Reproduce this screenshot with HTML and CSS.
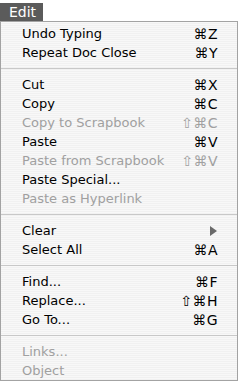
FILE: index.html
```html
<!DOCTYPE html>
<html lang="en">
<head>
  <meta charset="UTF-8">
  <meta name="viewport" content="width=device-width, initial-scale=1.0">
  <title>Edit Menu</title>
  <link rel="stylesheet" href="styles.css">
</head>
<body>
<div class="menu-title">Edit</div>
<div class="menu">
  <div class="item"><span>Undo Typing</span><span class="key">⌘Z</span></div>
  <div class="item"><span>Repeat Doc Close</span><span class="key">⌘Y</span></div>
  <div class="sep"></div>
  <div class="item"><span>Cut</span><span class="key">⌘X</span></div>
  <div class="item"><span>Copy</span><span class="key">⌘C</span></div>
  <div class="item disabled"><span>Copy to Scrapbook</span><span class="key">⇧⌘C</span></div>
  <div class="item"><span>Paste</span><span class="key">⌘V</span></div>
  <div class="item disabled"><span>Paste from Scrapbook</span><span class="key">⇧⌘V</span></div>
  <div class="item"><span>Paste Special...</span></div>
  <div class="item disabled"><span>Paste as Hyperlink</span></div>
  <div class="sep"></div>
  <div class="item"><span>Clear</span><span class="arrow"></span></div>
  <div class="item"><span>Select All</span><span class="key">⌘A</span></div>
  <div class="sep"></div>
  <div class="item"><span>Find...</span><span class="key">⌘F</span></div>
  <div class="item"><span>Replace...</span><span class="key">⇧⌘H</span></div>
  <div class="item"><span>Go To...</span><span class="key">⌘G</span></div>
  <div class="sep"></div>
  <div class="item disabled"><span>Links...</span></div>
  <div class="item disabled"><span>Object</span></div>
</div>
</body>
</html>
```

FILE: styles.css
```css
body {
  margin: 0;
  background-color: #fff;
  font-family: "DejaVu Sans", Verdana, sans-serif;
  font-size: 13px;
}

.menu-title {
  margin-top: 3px;
  width: 34px;
  height: 18px;
  line-height: 18px;
  padding-left: 9px;
  background-color: #5b5b5b;
  color: #fff;
  font-size: 14px;
}

.menu {
  width: 236px;
  height: 356px;
  padding-top: 2px;
  border: 1px solid #a3a3a3;
  background-color: #f6f6f6;
  background-image: repeating-linear-gradient(#f8f8f8 0, #f8f8f8 1px, #f1f1f1 1px, #f1f1f1 2px);
}

.item {
  display: flex;
  justify-content: space-between;
  align-items: center;
  height: 19px;
  padding: 0 19px 0 21px;
  color: #000;
}

.item.disabled {
  color: #a0a0a0;
}

.key {
  font-size: 14px;
  letter-spacing: 0.5px;
}

.arrow {
  width: 0;
  height: 0;
  margin-right: 1px;
  border-top: 5px solid transparent;
  border-bottom: 5px solid transparent;
  border-left: 7px solid #6a6a6a;
}

.sep {
  height: 6px;
  border-bottom: 1px solid #c8c8c8;
  margin-bottom: 6px;
}
```
